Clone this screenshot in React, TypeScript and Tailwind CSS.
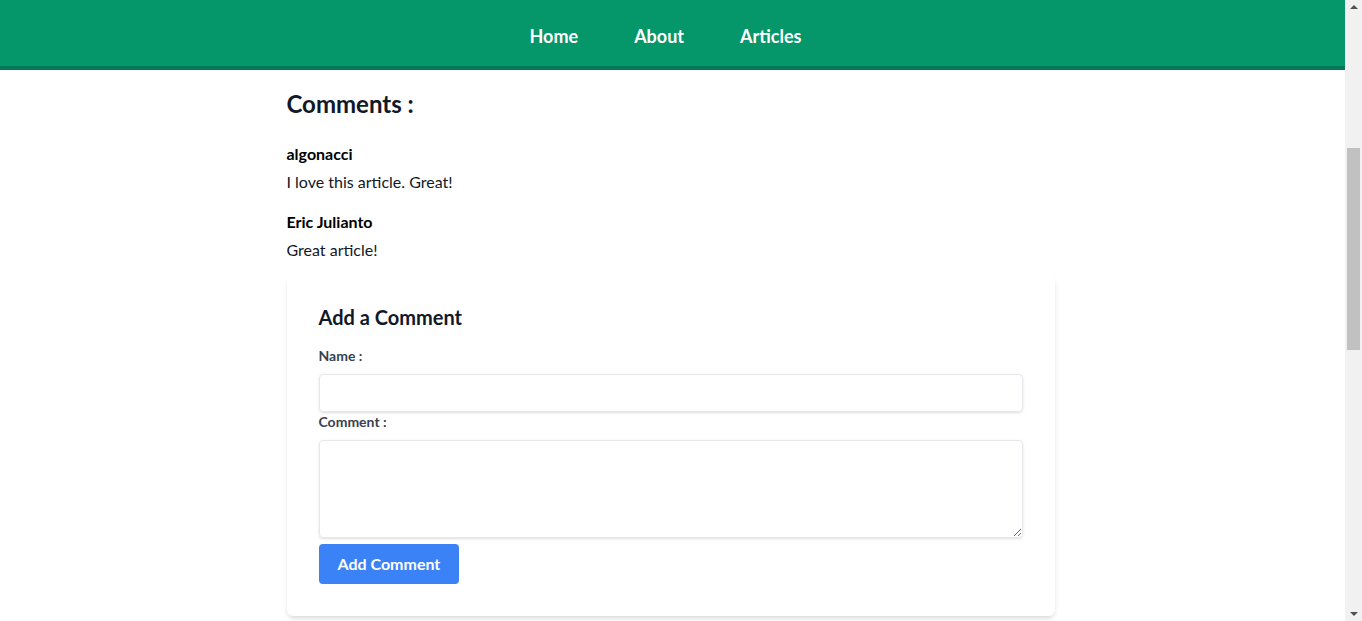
import { useState } from "react";

const comments = [
  { username: "algonacci", text: "I love this article. Great!" },
  { username: "Eric Julianto", text: "Great article!" },
];

function NavBar() {
  return (
    <nav className="bg-[#059669] border-b-4 border-[#047857]">
      <ul className="flex justify-center items-center h-[66px] pt-1.5 pr-[14px]">
        <li>
          <a href="#" className="px-7 text-lg font-bold text-white">Home</a>
        </li>
        <li>
          <a href="#" className="px-7 text-lg font-bold text-white">About</a>
        </li>
        <li>
          <a href="#" className="px-7 text-lg font-bold text-white">Articles</a>
        </li>
      </ul>
    </nav>
  );
}

function CommentsList() {
  return (
    <>
      <h3 className="text-2xl font-bold text-[#111827] mb-[22px]">Comments :</h3>
      {comments.map((c, i) => (
        <div key={i} className={i === comments.length - 1 ? "mb-[13px]" : "mb-4"}>
          <h4 className="font-bold text-black">{c.username}</h4>
          <p className="mt-1 text-[#111827]">{c.text}</p>
        </div>
      ))}
    </>
  );
}

function AddCommentForm() {
  const [username, setUsername] = useState("");
  const [commentText, setCommentText] = useState("");

  return (
    <form
      className="bg-white shadow-md rounded-md px-8 pt-7 pb-8 mb-4"
      onSubmit={(e) => e.preventDefault()}
    >
      <h3 className="text-xl font-bold text-[#111827] mb-[15px]">Add a Comment</h3>
      <label className="block text-[#374151] text-sm font-bold mb-2">Name :</label>
      <input
        type="text"
        value={username}
        onChange={(e) => setUsername(e.target.value)}
        className="shadow appearance-none border border-gray-200 rounded w-full py-2 px-3 text-gray-700 leading-tight focus:outline-none"
      />
      <label className="block text-[#374151] text-sm font-bold mb-2">Comment :</label>
      <textarea
        rows={4}
        cols={50}
        value={commentText}
        onChange={(e) => setCommentText(e.target.value)}
        className="block shadow appearance-none border border-gray-200 rounded w-full py-2 px-3 text-gray-700 leading-tight focus:outline-none mb-1.5"
      />
      <button className="bg-[#3b82f6] text-white font-bold py-2 px-[19px] rounded">
        Add Comment
      </button>
    </form>
  );
}

// window scrollbar as it shows in the screenshot
function ScrollBar() {
  return (
    <div className="w-[17px] shrink-0 bg-[#f1f1f1] flex flex-col items-center">
      <div className="mt-[5px] w-0 h-0 border-l-4 border-r-4 border-b-4 border-l-transparent border-r-transparent border-b-[#505050]" />
      <div className="mt-[139px] w-[13px] h-[202px] bg-[#c1c1c1]" />
      <div className="mt-auto mb-[5px] w-0 h-0 border-l-4 border-r-4 border-t-4 border-l-transparent border-r-transparent border-t-[#505050]" />
    </div>
  );
}

export default function App() {
  return (
    <div className="flex h-screen overflow-hidden bg-white" style={{ fontFamily: "Lato, 'Noto Sans', sans-serif" }}>
      <div className="flex-1 min-w-0">
        <NavBar />
        <div className="pr-1">
          <div className="max-w-3xl mx-auto pt-[18px]">
            <CommentsList />
            <AddCommentForm />
          </div>
        </div>
      </div>
      <ScrollBar />
    </div>
  );
}
